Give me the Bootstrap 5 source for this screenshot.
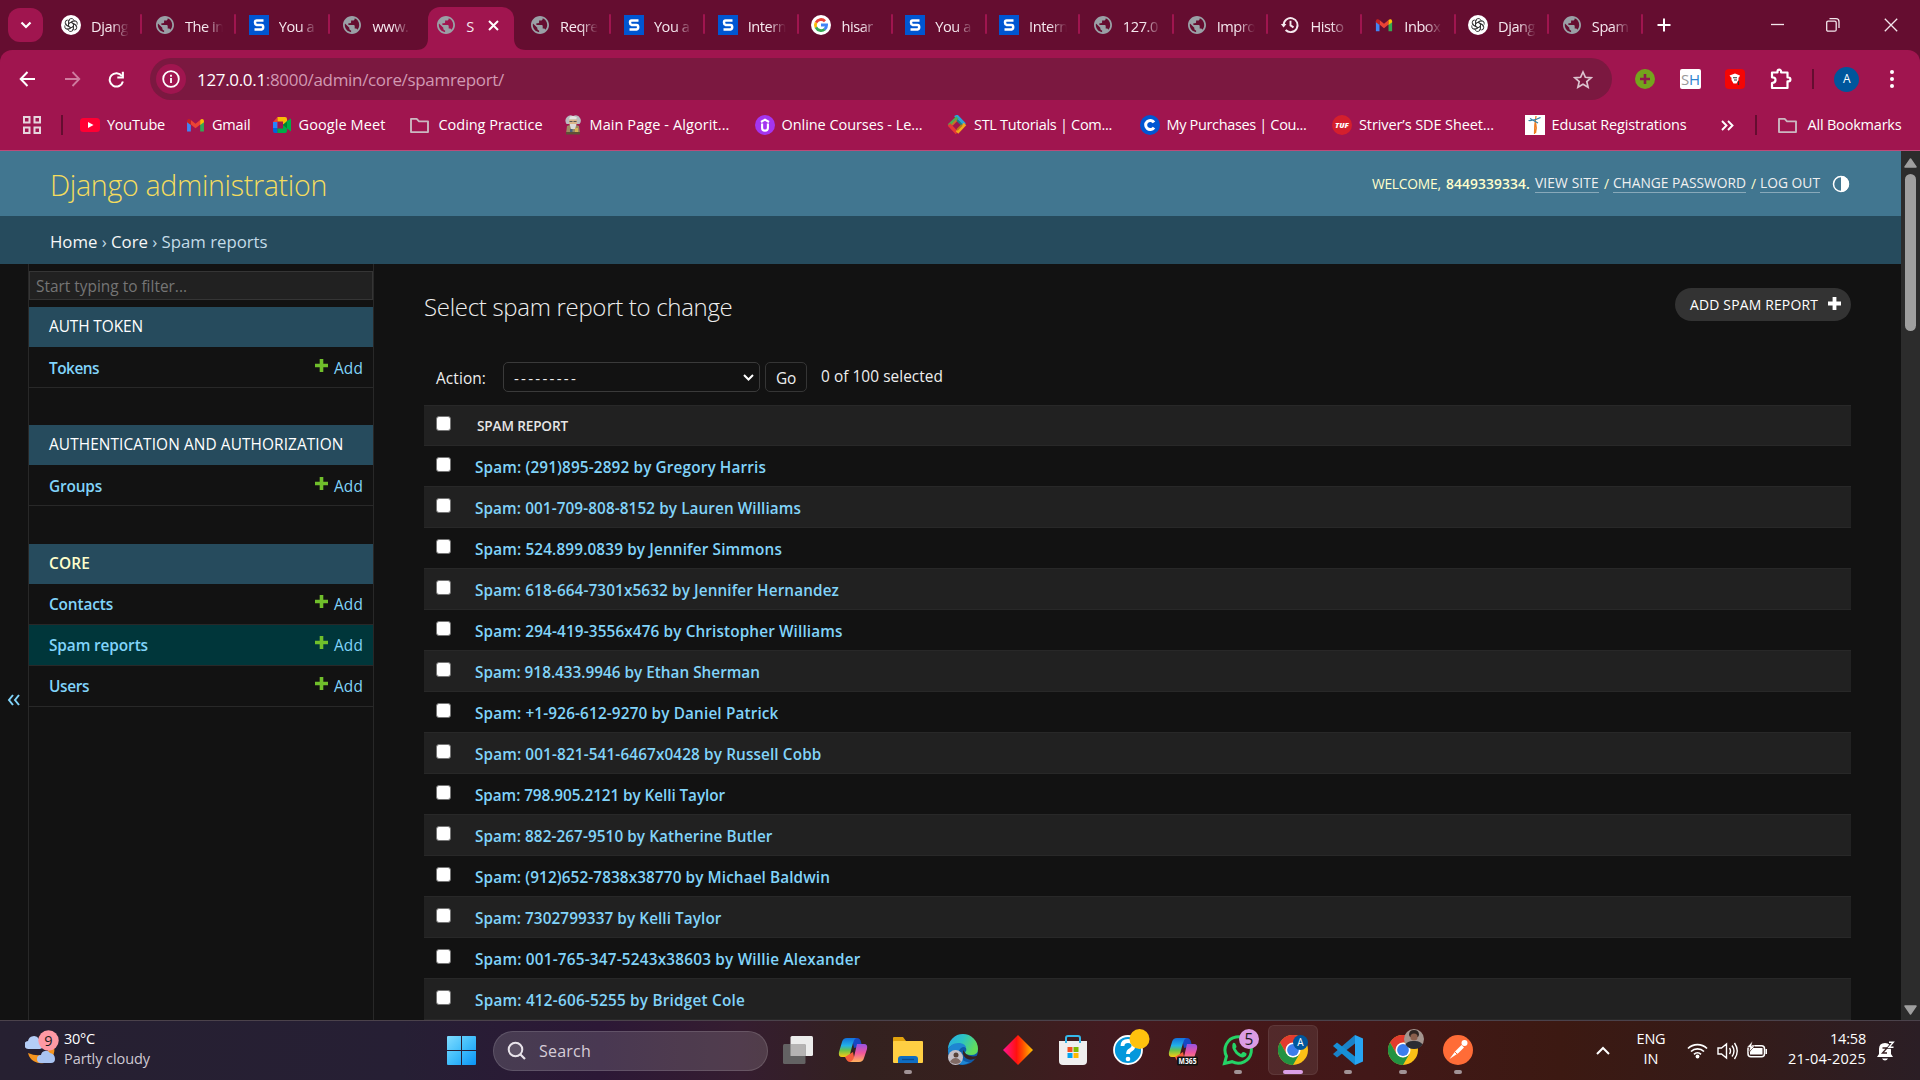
<!DOCTYPE html>
<html lang="en">
<head>
<meta charset="utf-8">
<title>Select spam report to change | Django site admin</title>
<link rel="stylesheet" href="https://cdn.jsdelivr.net/npm/bootstrap@5.3.0/dist/css/bootstrap.min.css">
<style>
*{box-sizing:border-box}
body{width:1920px;height:1080px;overflow:hidden;background:#121212;font-family:"Open Sans","Noto Sans",sans-serif;font-size:15.4px;line-height:20px;color:#eee}
svg{display:block;flex:none}
.fit{white-space:nowrap;display:inline-block}
/* browser chrome */
.tabstrip{height:50px;background:#650d30;padding-left:8px}
.tabsearch{width:35px;height:34px;border-radius:12px;background:#a0154f;margin-right:4.6px}
.btab{width:93.8px;height:50px;position:relative;padding:0 9px 0 13.5px;font-size:14.6px;letter-spacing:-.45px}
.btab .fav{width:20px;display:grid;place-items:center}
.btab .ttl{width:38px;margin-left:10px;margin-top:1px;overflow:hidden;white-space:nowrap;color:#f6e9ef;-webkit-mask-image:linear-gradient(90deg,#000 55%,transparent)}
.btab.sep::after{content:"";position:absolute;right:-1px;top:14px;width:2px;height:20px;background:#a0154f;border-radius:1px}
.btab.live::before{content:"";position:absolute;left:5.2px;right:3px;top:7px;height:43px;border-radius:12px 12px 0 0;background:#a0154f}
.btab.live>*{position:relative}
.btab.live .ttl{width:8px;-webkit-mask-image:none}
.foot{position:absolute!important;bottom:0}
.foot-l{left:-6.8px}.foot-r{right:-9px}
.toolbarwrap{background:#650d30}
.toolbar{height:50px;background:#a0154f;border-radius:12px 12px 0 0;padding-left:16px}
.tbtn{width:45px;display:grid;place-items:center}
.omni{width:1462px;height:42px;border-radius:21px;background:#7b1840;margin-top:8px;padding:0 19px 0 6px}
.infoc{width:30px;height:30px;border-radius:50%;background:#a0154f;display:grid;place-items:center;margin-right:11px}
.url{font-size:17px;color:#d199b2;margin-top:1px}.url b{font-weight:400;color:#fff}
.ext{width:45.2px;display:grid;place-items:center}
.avatar{width:25px;height:25px;border-radius:50%;background:#00569c;font-size:12px;display:grid;place-items:center;color:#fff}
.bookbar{height:51px;background:#a0154f;border-bottom:1px solid #bd4a79;font-size:14.5px;color:#fff}
.bm .fav{width:20px;margin-right:7px;display:grid;place-items:center}
.vsep{width:2px;height:20px;background:#650d30}
/* admin page */
.viewport{height:869px}
.page{width:1901px;height:869px;overflow:hidden;background:#121212}
.djhead{height:65px;background:#417690;padding:0 50px}
.djtitle{font-size:28.6px;font-weight:300;color:#f5dd5d;line-height:36px}
.tools{font-size:13.8px;color:#ffc}
.tools a{color:#f0f0f0;text-decoration:none;border-bottom:1px solid #88a9ba;line-height:18px}
.crumbs{height:48px;background:#264b5d;padding-left:50px;font-size:16.8px;color:#c4dce8}
.crumbs i{font-style:normal;color:#f7f7f7}
.toggler{width:29px;height:756px;border-right:1px solid #282828;padding-left:7px}
.side{width:345px;border-right:1px solid #282828;padding-top:7px}
.filter{height:29px;border:1px solid #353535;background:#212121;color:#757575;padding:6px 0 0 6px;margin-bottom:7px;line-height:18px}
.cap{height:40px;background:#264b5d;color:#fff;padding:0 20px;font-size:15.4px}
.mod{margin-bottom:37.4px}
.ln{height:41px;padding:3px 10px 0 20px;border-bottom:1px solid #282828;color:#81d4fa}
.ln>b{font-weight:600}
.ln .plus{margin:-7px 6px 0 0}
.sel{background:#00363a}
.main{padding:0 50px 0 50px;width:1527px}
.h1x{font-size:24px;font-weight:300;color:#eee;line-height:30px}
.addbtn{width:176px;height:33px;border-radius:17px;background:#333;color:#fff;font-size:13.9px;padding:0 10px 0 15px}
.picker{width:257px;height:30px;border:1px solid #3a3a3a;border-radius:5px;padding:0 5px 0 10px;font-size:15.2px}
.gobtn{width:42px;height:30px;border:1px solid #353535;border-radius:5px;display:grid;place-items:center;margin:0 14px 0 5px}
.res{height:41px;border-bottom:1px solid #282828;padding-left:12px;color:#81d4fa;font-weight:600;font-size:15.3px}
.res:nth-child(odd){background:#212121}
.res.hd{height:41px;color:#e6e6e6;font-size:13.6px;font-weight:600;border-top:1px solid #282828}
.cb{width:15px;height:15px;background:#fff;border:1.4px solid #767676;border-radius:3px;margin:-4px 24px 0 0}
.hd .cb{margin-right:26px}
.sbar{width:19px;height:869px;background:#2c2c2c}
.thumb{width:11px;height:157px;border-radius:6px;background:#9f9f9f}
/* taskbar */
.taskbar{height:60px;border-top:1px solid #4b424b;background:linear-gradient(90deg,#262031 0,#261f34 400px,#2c1836 600px,#351d30 740px,#33211f 860px,#38201e 1000px,#431a20 1110px,#451719 1220px,#421818 1370px,#3c1912 1560px,#351b18 1720px,#2b1e25 1920px);font-size:14.5px;line-height:20px}
.lift{margin-top:-3px}
.wx{width:447px;padding-left:25px}
.pill{width:275px;height:40px;border-radius:20px;background:rgba(255,255,255,.14);border:1px solid rgba(255,255,255,.13);margin:0 2.5px 0 17px;padding-left:13px;font-size:16px;color:#d6cdd8}
.app{width:55px;height:59px;position:relative;display:grid;place-items:center}
.app.run::after{content:"";position:absolute;bottom:6px;left:23.5px;width:8px;height:4px;border-radius:2px;background:#a19396}
.app.on::before{content:"";position:absolute;left:2.5px;top:4px;width:50px;height:50px;border-radius:6px;background:rgba(255,255,255,.08);border:1px solid rgba(255,255,255,.07)}
.app.on::after{left:17.5px;width:20px;background:#dba0e6}
.app svg{position:relative;overflow:visible;top:-1px}
</style>
<script src="https://cdn.jsdelivr.net/npm/bootstrap@5.3.0/dist/js/bootstrap.bundle.min.js"></script>
</head>
<body>
<svg width="0" height="0" class="position-absolute">
<symbol id="globe" viewBox="2 2 20 20"><path fill="#9aa0a6" d="M12 2C6.480 2 2 6.480 2 12s4.480 10 10 10 10-4.480 10-10S17.520 2 12 2zm-1 17.930c-3.950-.49-7-3.850-7-7.930 0-.62.08-1.210.21-1.790L9 15v1c0 1.100.9 2 2 2v1.930zm6.900-2.540c-.26-.81-1-1.390-1.900-1.390h-1v-3c0-.55-.45-1-1-1H8v-2h2c.55 0 1-.45 1-1V7h2c1.100 0 2-.9 2-2v-.41c2.930 1.190 5 4.060 5 7.410 0 2.080-.8 3.970-2.100 5.390z"/></symbol>
<symbol id="gpt" viewBox="0 0 20 20"><circle cx="10" cy="10" r="10" fill="#fff"/><g fill="none" stroke="#333" stroke-width=".9" stroke-linecap="round"><g id="petal"><path d="M7.600 10.800V6.300a2.800 2.800 0 0 1 4.900-1.900M7.600 8.600l3.900-2.300a2.600 2.600 0 0 1 2.600 0"/></g><use href="#petal" transform="rotate(60 10 10)"/><use href="#petal" transform="rotate(120 10 10)"/><use href="#petal" transform="rotate(180 10 10)"/><use href="#petal" transform="rotate(240 10 10)"/><use href="#petal" transform="rotate(300 10 10)"/></g></symbol>
<symbol id="ess" viewBox="0 0 20 20"><path fill="#0056d2" d="M0 0h20v20H0z"/><path d="M14.500 5.500H7.500Q6 5.500 6 7.500T7.500 9.900h5Q14.200 9.900 14.200 12T12.500 14.500H5.500" fill="none" stroke="#fff" stroke-width="2.500"/></symbol>
<symbol id="goog" viewBox="0 0 20 20"><circle cx="10" cy="10" r="10" fill="#fff"/><g fill="none" stroke-width="2.800"><path stroke="#ea4335" d="M14 6.200A5.600 5.600 0 0 0 5 7.600"/><path stroke="#fbbc05" d="M5 7.500a5.600 5.600 0 0 0 0 5"/><path stroke="#34a853" d="M5 12.400a5.600 5.600 0 0 0 8.700 1.800"/><path stroke="#4285f4" d="M10 10h5.600a5.600 5.600 0 0 1-2 4.400"/></g></symbol>
<symbol id="hist" viewBox="0 0 20 20"><g fill="none" stroke="#f6e9ef" stroke-width="1.900"><path d="M3.600 10a7 7 0 1 1 2 5M10.500 5.800v4.600l3 2"/></g><path fill="#f6e9ef" d="M.8 9h5.600l-2.800 3.500z"/></symbol>
<symbol id="gmail" viewBox="0 0 20 16"><path fill="#4285f4" d="M1 3v11.500h4V7z"/><path fill="#34a853" d="M19 3v11.500h-4V7z"/><path fill="#ea4335" d="M5 2v5l5 4 5-4V2l-5 4z"/><path fill="#c5221f" d="M1 3.500C1 .8 3.500.6 5 2v5.500L1 4.500z"/><path fill="#fbbc04" d="M19 3.500C19 .8 16.500.6 15 2v5.500l4-3z"/></symbol>
<symbol id="yt" viewBox="0 0 20 14"><rect width="20" height="14" rx="3.500" fill="#ff0033"/><path fill="#fff" d="M8 4l5.500 3L8 10z"/></symbol>
<symbol id="meet" viewBox="0 0 20 16"><path fill="#fff" d="M5 5h6v6H5z" opacity=".25"/><path fill="#ea4335" d="M1 5l4.500-5v5z"/><path fill="#fbbc04" d="M5.500 0H13q2 0 2 2v3l-4 2.500V4.600H5.500z"/><path fill="#2684fc" d="M1 5h4.500v6H1z"/><path fill="#0066da" d="M1 11h4.500v5H3q-2 0-2-2z"/><path fill="#00ac47" d="M5.500 11.400H11V8l4-4 4-2.500v13L15 11.500V14q0 2-2 2H5.500z"/><path fill="#00832d" d="M11 8l4-3.500v7z"/><path fill="#a0154f" d="M5.500 5H11v6H5.500z"/></symbol>
<symbol id="fold" viewBox="0 0 22 18"><path d="M2 2h6l2.500 2.600H20V16H2z" fill="none" stroke="#cbb8c1" stroke-width="2" stroke-linejoin="round"/></symbol>
<symbol id="sage" viewBox="0 0 18 20"><path fill="#b9bcc0" d="M3 2q3-3 6-1 5-2 7 2 2 3-.5 6H2.500Q0 5 3 2z"/><path fill="#e4e4e2" d="M6 1.500q4-1.500 7 1l-1 2H5z"/><path fill="#d9b58a" d="M5 4.500h8V9H5z"/><path fill="#555" d="M5.500 6h3v1h-3zM9.500 6h3v1h-3z"/><path fill="#9b8a62" d="M3 11q6-3 12 0l1 8H2z"/><path fill="#dcdcda" d="M5.500 9h7L11 14H7z"/><path fill="#46607e" d="M6 14h2.500v5H6z"/><path fill="#d2b45a" d="M11 13h3v5h-3z"/><path fill="#5f5136" d="M2 17h14v2.500H2z"/></symbol>
<symbol id="udemy" viewBox="0 0 20 20"><circle cx="10" cy="10" r="10" fill="#a435f0"/><path d="M6 7l4-2.400L14 7M7.100 8.500V13q0 2.600 2.900 2.600t2.900-2.600V8.500" fill="none" stroke="#fff" stroke-width="2.100"/></symbol>
<symbol id="stl" viewBox="0 0 20 20"><g fill="none" stroke-width="3.400"><path stroke="#29a3dc" d="M8 2.600L10 1.500l7.600 8"/><path stroke="#4caf50" d="M2 10.500l8.500-8"/><path stroke="#e53935" d="M2 9.500l8 8.500"/><path stroke="#f2a81d" d="M18 9l-8 8.500"/><path stroke="#c8702a" stroke-width="1.800" d="M5 10l5-5"/><path stroke="#1d7f86" stroke-width="1.800" d="M10 5l5 5"/><path stroke="#b87a18" stroke-width="1.800" d="M15 10l-5 5"/></g></symbol>
<symbol id="cour" viewBox="0 0 20 20"><circle cx="10" cy="10" r="10" fill="#0056d2"/><path d="M14 7.300a4.600 4.600 0 1 0 0 5.400" fill="none" stroke="#fff" stroke-width="3"/></symbol>
<symbol id="edu" viewBox="0 0 20 20"><path fill="#fff" d="M0 0h20v20H0z"/><path d="M11 1q-1.500 8-1.500 18M10.500 7q1.500 6 0 11" stroke="#ef7d22" stroke-width="1.300" fill="none"/><path d="M3.500 5.500q6 .5 12-3M5 3.500l8 4.500" stroke="#3383a5" stroke-width="1.200" fill="none"/></symbol>
<symbol id="plusg" viewBox="0 0 13 13"><path fill="#70bf2b" d="M4.700 0h3.600v4.700H13v3.600H8.300V13H4.700V8.300H0V4.700h4.700z"/></symbol>
<symbol id="chrome" viewBox="0 0 30 30"><circle cx="15" cy="15" r="15" fill="#fbc116"/><path fill="#e33b2e" d="M2 7.500A15 15 0 0 1 28 7.500H15L8.500 18.800z"/><path fill="#229342" d="M2 7.500A15 15 0 0 0 15 30l6.500-11.200L15 22.500l-6.500-3.700z"/><circle cx="15" cy="15" r="7.500" fill="#fff"/><circle cx="15" cy="15" r="5.900" fill="#3b7ded"/></symbol>
<symbol id="copi" viewBox="0 0 30 28"><defs><linearGradient id="c1" x2="0" y2="1"><stop stop-color="#1270dc"/><stop offset=".4" stop-color="#22b1e8"/><stop offset=".65" stop-color="#68c24a"/><stop offset="1" stop-color="#fcca12"/></linearGradient><linearGradient id="c2" x2="0" y2="1"><stop stop-color="#9653e5"/><stop offset=".5" stop-color="#f0569b"/><stop offset="1" stop-color="#ffb35c"/></linearGradient></defs><path fill="#1648c4" d="M14 2h5q3 0 4 4l1 4-8 2z"/><path fill="url(#c1)" d="M9 2h9q-2 1-3 5l-3 11q-1 3-4 3H4q-4 0-3-5L4 6q1-4 5-4z"/><path fill="#f35d3b" d="M7 21l8-5 2 10h-5q-3 0-5-5z"/><path fill="url(#c2)" d="M19 8h7q4 0 3 5l-3 9q-1 4-5 4h-9q3-1 4-5z"/></symbol>
</svg>

<div class="tabstrip d-flex align-items-center">
 <div class="tabsearch d-grid" style="place-items:center"><svg width="12" height="8"><path d="M1.500 1.500L6 6l4.500-4.500" fill="none" stroke="#fff" stroke-width="2.200"/></svg></div>
 <div id="tabs" class="d-flex"></div>
 <svg width="14" height="14" style="margin-left:14.500px"><path d="M7 .5v13M.5 7h13" stroke="#fff" stroke-width="2"/></svg>
 <div class="d-flex align-items-center ms-auto" style="margin-right:22px;gap:49px">
  <svg width="14" height="14"><path d="M1 6.500h13" stroke="#f3e6ec" stroke-width="1.300"/></svg>
  <svg width="14" height="14" style="margin-left:-7px"><path d="M3.500 .7H10q3 0 3 3V10M.7 4.700q0-1.500 1.500-1.500h6.500q1.500 0 1.500 1.500v7q0 1.500-1.500 1.500H2.200q-1.500 0-1.500-1.500z" fill="none" stroke="#f3e6ec" stroke-width="1.300"/></svg>
  <svg width="14" height="14" style="margin-left:-5px"><path d="M.8 .8l12.400 12.400M13.200 .8L.8 13.200" stroke="#f3e6ec" stroke-width="1.300"/></svg>
 </div>
</div>

<div class="toolbarwrap"><div class="toolbar d-flex">
 <div class="d-flex pt-2" style="width:134px;margin-left:-11px;margin-right:11px">
  <div class="tbtn"><svg width="17" height="16"><path d="M16 8H2M8.500 1L1.700 8l6.800 7" fill="none" stroke="#fff" stroke-width="2"/></svg></div>
  <div class="tbtn"><svg width="17" height="16"><path d="M1 8h14M8.500 1l6.800 7-6.800 7" fill="none" stroke="#cf7c9f" stroke-width="1.800"/></svg></div>
  <div class="tbtn"><svg width="17" height="17"><path d="M14.900 10.500a6.700 6.700 0 1 1-1-5.500" fill="none" stroke="#fff" stroke-width="2"/><path d="M15.900 .8v6.600H9.300V5.400h4.500V.8z" fill="#fff"/></svg></div>
 </div>
 <div class="omni d-flex align-items-center">
  <div class="infoc"><svg width="18" height="18"><circle cx="9" cy="9" r="7.800" fill="none" stroke="#fff" stroke-width="1.800"/><path d="M9 8v5M9 4.800v1.900" stroke="#fff" stroke-width="1.800"/></svg></div>
  <div class="url fit" data-w="307"><b>127.0.0.1</b>:8000/admin/core/spamreport/</div>
  <svg width="20" height="19" class="ms-auto" viewBox="0 0 20 19"><path d="M10 2l2.400 5.300 5.700.5-4.300 3.800 1.300 5.600L10 14.300l-5.100 2.900 1.300-5.600-4.300-3.800 5.700-.5z" fill="none" stroke="#dcc3cf" stroke-width="1.700"/></svg>
 </div>
 <div class="d-flex align-items-center pt-2" style="margin-left:10.500px">
  <div class="ext"><svg width="20" height="20"><circle cx="10" cy="10" r="10" fill="#74a41d"/><path d="M10 5v10M5 10h10" stroke="#8d194b" stroke-width="2.600"/></svg></div>
  <div class="ext"><svg width="21" height="20"><rect width="21" height="20" rx="2" fill="#fff"/><text x="1" y="16" font-size="15" fill="#999" textLength="19"><tspan>S</tspan><tspan fill="#2e83cf">H</tspan></text></svg></div>
  <div class="ext"><svg width="20" height="20"><rect width="20" height="20" rx="4" fill="#f50505"/><path d="M4.500 6.500L10 4.500l5 2-1 2H6zM6.500 8.500h7v2.500l-2 3.500H8.500l-2-3.500z" fill="#fff"/><path d="M8 8.800h4M9 11h3" stroke="#333" stroke-width="1.100"/><path d="M13.500 12v4" stroke="#333" stroke-width="1.200"/></svg></div>
  <div class="ext"><svg width="22" height="22"><path d="M2 4.500h5.500V3.500a1.800 1.800 0 0 1 3.600 0v1H17.500v5h1a1.900 1.900 0 0 1 0 3.800h-1V20H2v-5q3.500 0 3.500-2.900T2 9.300z" fill="none" stroke="#fff" stroke-width="2.200" stroke-linejoin="round"/></svg></div>
  <div class="vsep" style="margin:0 20px 0 9px"></div>
  <div class="avatar">A</div>
  <svg width="6" height="20" style="margin-left:29.500px"><g fill="#fff"><circle cx="3" cy="3" r="2"/><circle cx="3" cy="10" r="2"/><circle cx="3" cy="17" r="2"/></g></svg>
 </div>
</div></div>

<div class="bookbar d-flex align-items-center">
 <svg width="18" height="18" style="margin:0 20px 0 23px"><g fill="none" stroke="#e6d5dd" stroke-width="2"><path d="M1 1h5.500v5.500H1zM11.500 1H17v5.500h-5.500zM1 11.500h5.500V17H1zM11.500 11.500H17V17h-5.500z"/></g></svg>
 <div class="vsep" style="margin-right:17px"></div>
 <div id="marks" class="d-flex"></div>
 <svg width="14" height="11"><path d="M2 1l4.500 4.500L2 10M8 1l4.500 4.500L8 10" fill="none" stroke="#fff" stroke-width="1.900"/></svg>
 <div class="vsep" style="margin:0 20px 0 21px"></div>
 <svg width="21" height="17"><use href="#fold"/></svg><span class="fit" data-w="94" style="margin-left:9.500px">All Bookmarks</span>
</div>

<div class="viewport d-flex">
 <div class="page">
  <header class="djhead d-flex justify-content-between align-items-center">
   <div class="djtitle fit" data-w="277" style="margin-top:2px">Django administration</div>
   <div class="tools d-flex align-items-center">
    <span class="fit" data-w="69" style="margin-right:5px">WELCOME,</span><b class="fit" data-w="84" style="font-weight:600;margin-right:5px">8449339334.</b><a class="fit" data-w="64">VIEW SITE</a><span class="fit" style="margin:0 4px 0 5px">/</span><a class="fit" data-w="133">CHANGE PASSWORD</a><span style="margin:0 4px 0 5px">/</span><a class="fit" data-w="60">LOG OUT</a>
    <svg width="18" height="18" style="margin-left:12px;margin-right:1px"><circle cx="9" cy="9" r="7.500" fill="none" stroke="#fff" stroke-width="1.500"/><path d="M9 1a8 8 0 0 1 0 16z" fill="#fff"/></svg>
   </div>
  </header>
  <nav class="crumbs d-flex align-items-center"><div class="fit" data-w="217.5" style="margin-top:3px"><i>Home</i> › <i>Core</i> › Spam reports</div></nav>
  <div class="d-flex">
   <div class="toggler d-flex align-items-center"><svg width="14" height="12" style="margin-top:116px"><path d="M6 1L2 6l4 5M12 1L8 6l4 5" fill="none" stroke="#81d4fa" stroke-width="2"/></svg></div>
   <aside class="side">
    <div class="filter"><span class="fit" data-w="151">Start typing to filter...</span></div>
    <div id="mods"></div>
   </aside>
   <main class="main">
    <div class="d-flex justify-content-between" style="padding-top:24px;height:98px">
     <div class="h1x fit" data-w="308.5" style="margin-top:4px">Select spam report to change</div>
     <div class="addbtn d-flex align-items-center justify-content-between"><span class="fit" data-w="128">ADD SPAM REPORT</span><svg width="13" height="13" style="margin-top:-2px"><path fill="#fff" d="M4.600 0h3.800v4.600H13v3.800H8.400V13H4.600V8.400H0V4.600h4.600z"/></svg></div>
    </div>
    <div class="d-flex align-items-center" style="height:30px;margin-bottom:13px;padding-left:12px">
     <span class="fit" data-w="50" style="margin-right:17px;margin-top:4px">Action:</span>
     <div class="picker d-flex align-items-center justify-content-between"><span class="fit" data-w="64" style="margin-top:2px">---------</span><svg width="11" height="7"><path d="M1 1l4.500 4.500L10 1" fill="none" stroke="#fff" stroke-width="2"/></svg></div>
     <div class="gobtn"><span class="fit" data-w="20" style="margin-top:3px">Go</span></div>
     <span class="fit" data-w="122">0 of 100 selected</span>
    </div>
    <div id="rows"></div>
   </main>
  </div>
 </div>
 <div class="sbar d-flex flex-column align-items-center">
  <svg width="13" height="10" style="margin:7px 0 6px"><path d="M6.500 1L12 9H1z" fill="#9f9f9f" stroke="#9f9f9f" stroke-linejoin="round" stroke-width="1.500"/></svg>
  <div class="thumb"></div>
  <svg width="13" height="10" class="mt-auto" style="margin-bottom:5px"><path d="M6.500 9L12 1H1z" fill="#9f9f9f" stroke="#9f9f9f" stroke-linejoin="round" stroke-width="1.500"/></svg>
 </div>
</div>

<footer class="taskbar d-flex align-items-center">
 <div class="wx d-flex align-items-center">
  <svg width="35" height="36" style="margin-right:4px;margin-top:-6px"><path d="M3 23a12 12 0 0 0 26-6l-3-4q-2 10-10 12-6 1-13-2z" fill="#f5941e"/><path d="M4 19a4 4 0 0 1-1-8 6 6 0 0 1 11-2q5 1 5 5t-4 5z" fill="#b4cdf6"/><path d="M16 33a4 4 0 0 1 0-8 5 5 0 0 1 9-2q5 1 5 6 0 4-4 4z" fill="#a9c4f2"/><circle cx="23.500" cy="10.500" r="10.200" fill="#ff99a4"/><text x="23.500" y="15.800" text-anchor="middle" font-size="14.500" fill="#1b1b1b">9</text></svg>
  <div class="lift"><div class="fit" data-w="31" style="display:block;width:max-content;color:#fff">30°C</div><div class="fit" data-w="86" style="display:block;width:max-content;color:#cfc9d2">Partly cloudy</div></div>
 </div>
 <svg width="29" height="29"><defs><linearGradient id="w" x2="1" y2="1"><stop stop-color="#80dcff"/><stop offset=".5" stop-color="#40bdfb"/><stop offset="1" stop-color="#0a94f5"/></linearGradient></defs><path fill="url(#w)" d="M1 0h13v14H0V1q0-1 1-1zM15 0h13q1 0 1 1v13H15zM0 15h14v14H1q-1 0-1-1zM15 15h14v13q0 1-1 1H15z"/></svg>
 <div class="pill d-flex align-items-center"><svg width="20" height="20"><circle cx="8.500" cy="8.500" r="6.800" fill="rgba(255,255,255,.12)" stroke="#e8e3ea" stroke-width="2"/><path d="M13.500 13.500L18 18" stroke="#e8e3ea" stroke-width="2.200"/></svg><span class="fit" data-w="52" style="margin-left:12px">Search</span></div>
 <div class="d-flex">
  <div class="app"><svg width="30" height="28"><rect x="7.500" y="0" width="22.500" height="20" rx="1.500" fill="#ececec"/><rect y="8" width="22.500" height="20" rx="1.500" fill="#666" opacity=".95"/><path d="M7.500 8h15v12h-15z" fill="#b5b3b3"/></svg></div>
  <div class="app"><svg width="30" height="28"><use href="#copi"/></svg></div>
  <div class="app run"><svg width="30" height="28"><path fill="#e2a20d" d="M0 2Q0 1 1 1h9l3 4v4H0z"/><rect y="5" width="30" height="22" rx="1" fill="#ffcf43"/><path d="M5 27v-4q0-3 3-3h14q3 0 3 3v4z" fill="#0f6dc2"/><path d="M9 23.500h12" stroke="#0a4b90" stroke-width="1.300"/></svg></div>
  <div class="app"><svg width="30" height="30"><defs><linearGradient id="e" x2="1" y2=".4"><stop stop-color="#2aa9e8"/><stop offset=".5" stop-color="#2bc3c4"/><stop offset="1" stop-color="#62dd5c"/></linearGradient></defs><circle cx="15" cy="15" r="15" fill="#0f5aa8"/><path d="M0 14A15 15 0 0 1 30 14q0 6-7 6-6 0-6-3 2-1 1-4-2-4-8-4Q3 9 0 14z" fill="url(#e)"/><path d="M0 15Q3 7 12 8q6 1 6 5-2-2-5 0-4 3-1 9 4 6 10 5-6 4-12 2Q0 26 0 15z" fill="#1e86d2"/><path d="M30 20.500q-7 2.500-12-1.500l-3-4q-1 8 6 9.500 5 .7 8-2z" fill="#352223"/><circle cx="7.500" cy="22.500" r="7.500" fill="#c4bfc7"/><circle cx="8" cy="20" r="2.500" fill="#584238"/><path d="M2 27q2-4 5.500-4t5.500 4q-5 4-11 0z" fill="#806a64"/></svg></div>
  <div class="app"><svg width="30" height="30"><defs><linearGradient id="d"><stop stop-color="#ff1493"/><stop offset=".45" stop-color="#ff1010"/><stop offset=".65" stop-color="#ff4b00"/><stop offset="1" stop-color="#ffc000"/></linearGradient></defs><path fill="url(#d)" d="M15 0l15 15-15 15L0 15z"/></svg></div>
  <div class="app"><svg width="30" height="30"><path d="M8 8V3q0-2 2-2h10q2 0 2 2v5" fill="none" stroke="#35b8ea" stroke-width="2"/><path d="M1 6h28v20q0 4-4 4H5q-4 0-4-4z" fill="#efefef"/><path d="M8 8V5.500M22 8V5.500" stroke="#35b8ea" stroke-width="2"/><path fill="#f25022" d="M9.500 12h5v5h-5z"/><path fill="#7fba00" d="M15.500 12h5v5h-5z"/><path fill="#00a4ef" d="M9.500 18h5v5h-5z"/><path fill="#ffb900" d="M15.500 18h5v5h-5z"/></svg></div>
  <div class="app"><svg width="30" height="30"><circle cx="15" cy="15" r="14" fill="#0398dc" stroke="#fff" stroke-width="1.800"/><path d="M9.500 11q0-5 5.500-5t5.500 4.500q0 3-3 4.500-2.500 1.300-2.500 4" fill="none" stroke="#fff" stroke-width="3.800"/><circle cx="15" cy="24" r="2.300" fill="#fff"/><circle cx="26.500" cy="4" r="10" fill="#ffc20e"/></svg></div>
  <div class="app"><svg width="30" height="30"><g transform="translate(0 1)"><use href="#copi" width="30" height="28"/></g><rect x="9" y="21.500" width="21" height="9" rx="1.500" fill="#111"/><text x="19.500" y="29" font-size="8" font-weight="700" text-anchor="middle" fill="#fff" textLength="18" lengthAdjust="spacingAndGlyphs">M365</text></svg></div>
  <div class="app run"><svg width="30" height="30"><path d="M1.500 28.500l2-7.300A13.200 13.200 0 1 1 9 26.700z" fill="none" stroke="#25d366" stroke-width="3"/><path d="M10 8q2-1 3 2l.5 1.500q0 1-1 2 2 4 5.500 5.500l1.500-1.700q1-.8 4 1.200.5 3-3.500 3.900-3 .2-7.500-4-5-6-2.500-10.400z" fill="#25d366"/><circle cx="26" cy="4" r="10" fill="#dc9ce4"/><text x="26" y="9.500" font-size="15.500" text-anchor="middle" fill="#1b1b1b">5</text></svg></div>
  <div class="app run on"><svg width="30" height="30"><use href="#chrome"/><circle cx="22.500" cy="7.500" r="7.500" fill="#00569c"/><text x="22.500" y="11" font-size="10" text-anchor="middle" fill="#fff">A</text></svg></div>
  <div class="app run"><svg width="30" height="30"><path d="M22 0v8.500L4 22.500 0 19z" fill="#1a82c8"/><path d="M22 30v-8.500L4 7.500 0 11z" fill="#178fd6"/><path d="M22 0l8 3.500v23L22 30z" fill="#27a5f3"/></svg></div>
  <div class="app run"><svg width="30" height="30"><use href="#chrome"/><circle cx="26" cy="4" r="10" fill="#a3958f"/><path d="M21 0q0-5 5-5t5 5l-1 2h-8z" fill="#2e2522"/><circle cx="26" cy="2" r="3.600" fill="#8a5f4c"/><path d="M17.500 9.500q2-4 8.500-3.500 6-.5 8.500 3.500-3 4.500-8.500 4.500t-8.500-4.500z" fill="#2b2d33"/></svg></div>
  <div class="app run"><svg width="30" height="30"><circle cx="15" cy="15" r="15" fill="#ff6c37"/><circle cx="21.500" cy="8" r="3" fill="#fff"/><path d="M6.500 24l6-8 6-6 2.500 2.500-5.500 5.500z" fill="#fff"/><path d="M12 17l2 2" stroke="#ff6c37"/></svg></div>
 </div>
 <div class="d-flex align-items-center ms-auto" style="margin-right:25px">
  <svg width="14" height="9" style="margin-right:26px"><path d="M1 8l6-6 6 6" fill="none" stroke="#fff" stroke-width="2"/></svg>
  <div class="text-center lift" style="width:30px;margin-right:21px;color:#fff"><span class="fit" data-w="29">ENG</span><br><span class="fit" data-w="15">IN</span></div>
  <svg width="21" height="17" style="margin-right:9px"><g fill="none" stroke="#fff" stroke-width="1.700"><path d="M1 6.500a13.500 13.500 0 0 1 19 0M4 9.500a9.300 9.300 0 0 1 13 0M7 12.400a5 5 0 0 1 7 0"/></g><circle cx="10.500" cy="14.500" r="1.900" fill="#fff"/></svg>
  <svg width="21" height="18" style="margin-right:9px"><g fill="none" stroke="#fff" stroke-width="1.400"><path d="M1 6v6h3.500l5 4V2l-5 4zM12.500 6q2 3 0 6M15 3.500q4 5.500 0 11M17.500 1q5.500 8 0 16"/></g></svg>
  <svg width="21" height="18" style="margin-right:20px;margin-top:-2px"><rect x="1" y="4.800" width="16.500" height="11" rx="3" fill="none" stroke="#fff" stroke-width="1.500"/><path d="M6 7h9.500v6.500H3v-3z" fill="#fff"/><path d="M18.500 8h1.500v5h-1.500z" fill="#fff"/><path d="M5.500 0L0 6.500h3L2 11l6-6H4.500z" fill="#fff" stroke="#381b17" stroke-width=".5"/></svg>
  <div class="text-end lift" style="width:78px;margin-right:11px;color:#fff"><span class="fit" data-w="36">14:58</span><br><span class="fit" data-w="78">21-04-2025</span></div>
  <svg width="18" height="20"><path d="M8 2q6 0 6 7v4l2 3H0l2-3V8q0-6 6-6zM5 17.500h6q-1 2-3 2t-3-2z" fill="#fff"/><path d="M5.500 7h4.500l-4.500 5H10" stroke="#3a2224" stroke-width="1.400" fill="none"/><path d="M12 1.200h4.300l-4.300 5h4.500" stroke="#2b1e25" stroke-width="3" fill="none"/><path d="M12 1.200h4.300l-4.300 5h4.500" stroke="#fff" stroke-width="1.400" fill="none"/></svg>
 </div>
</footer>

<script>
const ic=(id,w=18,h=18)=>`<svg width="${w}" height="${h}"><use href="#${id}"/></svg>`;
const tuf='<svg width="20" height="20"><circle cx="10" cy="10" r="10" fill="#d41f2d"/><text x="10" y="12.800" font-size="7.600" font-weight="800" font-style="italic" text-anchor="middle" fill="#fff">TUF</text></svg>';
const tabs=[['gpt','Djang'],['globe','The in'],['ess','You a'],['globe','www.'],['globe','S'],['globe','Reqre'],['ess','You a'],['ess','Intern'],['goog','hisar'],['ess','You a'],['ess','Intern'],['globe','127.0'],['globe','Impro'],['hist','Histo'],['gmail','Inbox'],['gpt','Djang'],['globe','Spam']];
document.getElementById('tabs').innerHTML=tabs.map(([i,t],n)=>{
 const live=n===4, s=i==='globe'||i==='gmail'?18:20;
 return `<div class="btab d-flex align-items-center ${live?'live':n===3?'':'sep'}">${live?'<svg class="foot foot-l" width="12" height="12"><path d="M12 0v12H0Q12 12 12 0z" fill="#a0154f"/></svg><svg class="foot foot-r" width="12" height="12"><path d="M0 0v12h12Q0 12 0 0z" fill="#a0154f"/></svg>':''}<div class="fav">${ic(i,s,i==='gmail'?15:s)}</div><div class="ttl">${t}</div>${live?'<svg width="11" height="11" style="margin-left:14px"><path d="M1 1l9 9M10 1l-9 9" stroke="#fff" stroke-width="2"/></svg>':''}</div>`}).join('');
// icon, label, label width, slot width, icon width, icon height
const marks=[['yt','YouTube',58,105,20,14],['gmail','Gmail',38.500,86.500,19,15],['meet','Google Meet',87,137,20,16],['fold','Coding Practice',104,154,21,17],['sage','Main Page - Algorit...',140,192,18,20],['udemy','Online Courses - Le...',141,192.500,20,20],['stl','STL Tutorials | Com...',138,192.500,20,20],['cour','My Purchases | Cou...',140,192.500,20,20],['tuf','Striver’s SDE Sheet...',135,192.500,20,20],['edu','Edusat Registrations',135,195.500,20,20]];
document.getElementById('marks').innerHTML=marks.map(([i,t,w,s,a,b])=>`<div class="bm d-flex align-items-center" style="width:${s}px"><div class="fav" ${i==='fold'?'style="margin-right:10px"':''}>${i==='tuf'?tuf:ic(i,a,b)}</div><span class="fit" data-w="${w}">${t}</span></div>`).join('');
const mods=[['AUTH TOKEN',94,[['Tokens',50]]],['AUTHENTICATION AND AUTHORIZATION',294.5,[['Groups',53]]],['CORE',41,[['Contacts',64],['Spam reports',99],['Users',40]]]];
document.getElementById('mods').innerHTML=mods.map(([c,w,l])=>`<section class="mod"><div class="cap d-flex align-items-center"><span class="fit" data-w="${w}" ${c==='CORE'?'style="color:#ffc;font-weight:600"':''}>${c}</span></div>${l.map(([t,x])=>`<div class="ln d-flex align-items-center ${t==='Spam reports'?'sel':''}"><b class="fit me-auto" data-w="${x}">${t}</b><span class="plus">${ic('plusg',13,13)}</span><span class="fit" data-w="29">Add</span></div>`).join('')}</section>`).join('');
const rows=[['(291)895-2892 by Gregory Harris',291],['001-709-808-8152 by Lauren Williams',326],['524.899.0839 by Jennifer Simmons',307],['618-664-7301x5632 by Jennifer Hernandez',364],['294-419-3556x476 by Christopher Williams',367.5],['918.433.9946 by Ethan Sherman',285],['+1-926-612-9270 by Daniel Patrick',303.5],['001-821-541-6467x0428 by Russell Cobb',346.5],['798.905.2121 by Kelli Taylor',250],['882-267-9510 by Katherine Butler',297.5],['(912)652-7838x38770 by Michael Baldwin',355],['7302799337 by Kelli Taylor',246.5],['001-765-347-5243x38603 by Willie Alexander',385.5],['412-606-5255 by Bridget Cole',270]];
document.getElementById('rows').innerHTML='<div class="res hd d-flex align-items-center"><i class="cb"></i><span class="fit" data-w="91">SPAM REPORT</span></div>'+rows.map(([t,w])=>`<div class="res d-flex align-items-center"><i class="cb"></i><span class="fit" data-w="${w}" style="margin-top:1px">Spam: ${t}</span></div>`).join('');
// tracking is computed so each label keeps its design width
document.querySelectorAll('[data-w]').forEach(e=>{
 const n=[...e.textContent].length, d=(+e.dataset.w-e.getBoundingClientRect().width)/n;
 e.style.letterSpacing=d.toFixed(3)+'px';
});
</script>
</body>
</html>
